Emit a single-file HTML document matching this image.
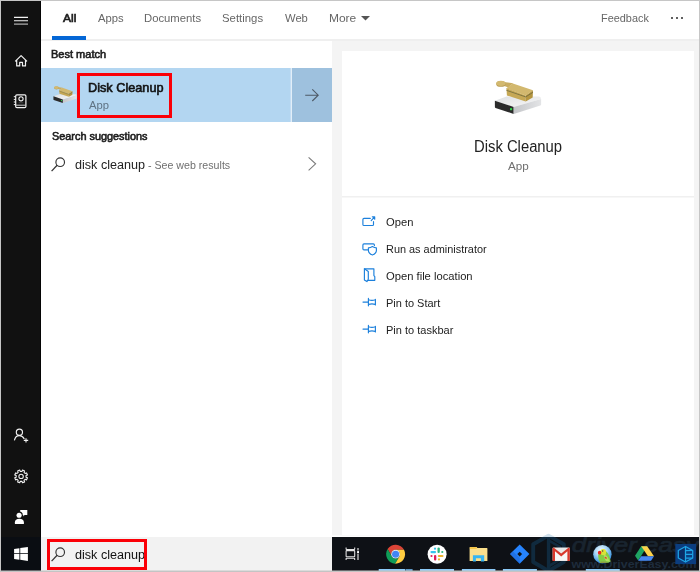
<!DOCTYPE html>
<html>
<head>
<meta charset="utf-8">
<style>
html,body{margin:0;padding:0;}
body{width:700px;height:572px;overflow:hidden;background:#f4f4f4;font-family:"Liberation Sans",sans-serif;position:relative;}
.abs{position:absolute;}
#root{left:0;top:0;width:700px;height:572px;background:#f4f4f4;overflow:hidden;}
.t{position:absolute;white-space:nowrap;line-height:1;transform-origin:0 0;}
.red{border:3px solid #fb0007;box-sizing:border-box;}
svg{position:absolute;overflow:visible;}
</style>
</head>
<body>
<div id="root" class="abs">
  <!-- header -->
  <div class="abs" style="left:41px;top:1px;width:658px;height:39px;background:#fff;"></div>
  <div class="abs" style="left:41px;top:39px;width:658px;height:2px;background:#efefef;"></div>
  <!-- left panel -->
  <div class="abs" style="left:41px;top:41px;width:291px;height:496px;background:#fff;"></div>
  <!-- sidebar -->
  <div class="abs" style="left:1px;top:1px;width:40px;height:536px;background:#111;"></div>
  <div class="abs" style="left:40px;top:1px;width:1px;height:536px;background:#050505;"></div>
  <div class="abs" style="left:1px;top:537px;width:40px;height:34px;background:#0a0d12;"></div>

  <!-- tab underline -->
  <div class="abs" style="left:52px;top:36px;width:34px;height:4px;background:#0467d6;"></div>
  <svg style="left:361px;top:16px" width="9" height="5" viewBox="0 0 9 5"><path d="M0 0 L9 0 L4.5 4.6 Z" fill="#555"/></svg>
  <!-- dots -->
  <div class="abs" style="left:671px;top:17px;width:2px;height:2px;background:#606060;"></div>
  <div class="abs" style="left:676px;top:17px;width:2px;height:2px;background:#606060;"></div>
  <div class="abs" style="left:681px;top:17px;width:2px;height:2px;background:#606060;"></div>

  <!-- selected row -->
  <div class="abs" style="left:41px;top:68px;width:250px;height:53.5px;background:#b3d6f1;"></div>
  <div class="abs" style="left:290px;top:68px;width:1px;height:53.5px;background:#c4def4;"></div><div class="abs" style="left:291px;top:68px;width:1px;height:53.5px;background:#e2eef8;"></div>
  <div class="abs" style="left:292px;top:68px;width:40px;height:53.5px;background:#9ec1de;"></div>
  <div class="abs red" style="left:77px;top:73px;width:95px;height:44.6px;"></div>
  <!-- arrow -->
  <svg style="left:305px;top:88.5px" width="14" height="13" viewBox="0 0 14 13"><path d="M0.2 6.2 H13 M7.3 0.4 L13.2 6.2 L7.3 12" fill="none" stroke="#4e5a66" stroke-width="1.1"/></svg>
  <!-- chevron -->
  <svg style="left:308px;top:157px" width="9" height="14" viewBox="0 0 9 14"><path d="M0.6 0.4 L7.6 6.8 L0.6 13.4" fill="none" stroke="#7a7a7a" stroke-width="1.1"/></svg>

  <!-- magnifier (suggestion) -->
  <svg style="left:51.1px;top:156.5px" width="15" height="15" viewBox="0 0 15 15"><circle cx="9.2" cy="5.2" r="4.3" fill="none" stroke="#333" stroke-width="1.15"/><path d="M6.1 8.3 L0.6 14.1" stroke="#333" stroke-width="1.25" fill="none"/></svg>

  <!-- right cards -->
  <div class="abs" style="left:342px;top:50.5px;width:352px;height:487px;background:#fff;"></div>
  <div class="abs" style="left:342px;top:196px;width:352px;height:1px;background:#f0f0f0;"></div><div class="abs" style="left:342px;top:197px;width:352px;height:1px;background:#f7f7f7;"></div>

<div class="abs" style="left:332px;top:536px;width:367px;height:1px;background:#fff;"></div>
  <div class="abs" style="left:332px;top:535px;width:367px;height:1px;background:#fafafa;"></div>

  <!-- sidebar icons (page coords) -->
  <svg style="left:0;top:0" width="42" height="572" viewBox="0 0 42 572">
    <g stroke="#f2f2f2" fill="none" stroke-width="1.15">
      <path d="M14 17.3 H28 M14 20.7 H28" />
      <path d="M14 24.1 H28" stroke="#bdbdbd"/>
      <!-- home -->
      <path d="M15.2 61.4 L21.1 55.6 L27 61.4 M16.7 60.3 V65.9 H19.7 V62.3 H22.5 V65.9 H25.5 V60.3" stroke-width="1.2" stroke-linejoin="round"/>
      <!-- notebook -->
      <rect x="15.7" y="94.9" width="10.2" height="12.8" rx="1.2" stroke-width="1.2"/>
      <path d="M15.9 105.2 H25.8" stroke="#cfcfcf" stroke-width="1"/>
      <circle cx="21" cy="98.8" r="2.1" stroke-width="1.1"/>
      <path d="M18.6 102.8 H23.4" stroke="#555" stroke-width="0.8"/>
      <path d="M13.8 96.7 H15.8 M13.8 99.4 H15.8 M13.8 102 H15.8 M13.8 104.6 H15.8" stroke-width="1"/>
      <!-- person add -->
      <circle cx="19.4" cy="432.3" r="3.1" stroke-width="1.15"/>
      <path d="M14.4 440.3 C15 437.3 17 435.6 19.4 435.6 C21.6 435.6 23.2 436.9 24.3 439" stroke-width="1.15"/>
      <path d="M26 438.2 V442.6 M23.8 440.4 H28.2" stroke-width="1.1"/>
      <!-- gear -->
      <path d="M27.50 475.28 L27.50 477.52 L25.96 477.57 L25.36 479.01 L26.42 480.14 L24.84 481.72 L23.71 480.66 L22.27 481.26 L22.22 482.80 L19.98 482.80 L19.93 481.26 L18.49 480.66 L17.36 481.72 L15.78 480.14 L16.84 479.01 L16.24 477.57 L14.70 477.52 L14.70 475.28 L16.24 475.23 L16.84 473.79 L15.78 472.66 L17.36 471.08 L18.49 472.14 L19.93 471.54 L19.98 470.00 L22.22 470.00 L22.27 471.54 L23.71 472.14 L24.84 471.08 L26.42 472.66 L25.36 473.79 L25.96 475.23 Z" stroke-width="1.1" stroke-linejoin="round" transform="rotate(22.5 21.1 476.4)"/>
      <circle cx="21.1" cy="476.4" r="2.2" stroke-width="1.05"/>
    </g>
    <!-- feedback person -->
    <g fill="#fff">
      <path d="M20.2 509.9 H27.3 V515.1 H24.6 L23.3 516.4 V515.1 H20.2 Z"/>
      <circle cx="19.1" cy="515.3" r="3.7" fill="#111"/>
      <circle cx="19.1" cy="515.3" r="2.55"/>
      <path d="M14.9 523.9 V522.2 C14.9 520 16.6 518.7 19.4 518.7 C22.2 518.7 23.9 520 23.9 522.2 V523.9 Z"/>
    </g>
    <!-- windows logo -->
    <g fill="#fff">
      <path d="M14.1 548.9 L19.4 548.15 V553.3 H14.1 Z"/>
      <path d="M20.25 548.05 L27.9 546.9 V553.3 H20.25 Z"/>
      <path d="M14.1 554.1 H19.4 V559.75 L14.1 559 Z"/>
      <path d="M20.25 554.1 H27.9 V560.9 L20.25 559.85 Z"/>
    </g>
  </svg>
<svg style="left:488px;top:74px" width="60" height="46" viewBox="488 74 60 46">
    <defs>
      <linearGradient id="gTop" x1="0" y1="0" x2="1" y2="1"><stop offset="0" stop-color="#dfe1e3"/><stop offset="1" stop-color="#f7f7f7"/></linearGradient>
      <linearGradient id="gSide" x1="0" y1="0" x2="1" y2="0"><stop offset="0" stop-color="#c4c6c9"/><stop offset="1" stop-color="#e3e4e6"/></linearGradient>
    </defs>
    <path d="M494.9 100.7 L506.6 96.4 H539 Q541.2 96.6 541.1 99 L513.7 107 Z" fill="url(#gTop)"/>
    <path d="M494.9 100.7 L513.7 107 V113.9 L495.5 108 Q494.9 107.7 494.9 107 Z" fill="#2b2b2b"/>
    <path d="M513.7 107 L541.1 99 V104.6 Q541.1 105.3 540.4 105.6 L513.7 113.9 Z" fill="url(#gSide)"/>
    <rect x="510" y="108.1" width="2.1" height="2.1" fill="#2fd046"/>
    <!-- brush -->
    <path d="M503.6 82.0 L513.2 83.3 L508.2 87.6 L503.8 85.7 Z" fill="#c9ad62"/>
    <ellipse cx="500.9" cy="83.9" rx="4.7" ry="2.9" fill="#b99c50"/>
    <ellipse cx="500.9" cy="83.3" rx="4.6" ry="2.6" fill="#d3b970"/>
    <path d="M512.9 83.4 L533 90.3 L525.7 95.6 L506.4 88.3 Z" fill="#d2b86e"/>
    <path d="M506.4 88.1 L525.7 95.4 V101.5 L506.9 95.4 Z" fill="#c6a855"/>
    <path d="M525.7 95.4 L533 90.3 L532.7 97.5 L525.7 101.5 Z" fill="#b59641"/>
    <path d="M506.4 90.3 L525.7 96.9 L533 92.3" fill="none" stroke="#6f6a3e" stroke-width="0.8"/>
    </svg><svg style="left:49.55px;top:82.5px" width="30" height="23" viewBox="488 74 60 46">
    <defs>
      <linearGradient id="gTop2" x1="0" y1="0" x2="1" y2="1"><stop offset="0" stop-color="#dfe1e3"/><stop offset="1" stop-color="#f7f7f7"/></linearGradient>
      <linearGradient id="gSide2" x1="0" y1="0" x2="1" y2="0"><stop offset="0" stop-color="#c4c6c9"/><stop offset="1" stop-color="#e3e4e6"/></linearGradient>
    </defs>
    <path d="M494.9 100.7 L506.6 96.4 H539 Q541.2 96.6 541.1 99 L513.7 107 Z" fill="url(#gTop2)"/>
    <path d="M494.9 100.7 L513.7 107 V113.9 L495.5 108 Q494.9 107.7 494.9 107 Z" fill="#2b2b2b"/>
    <path d="M513.7 107 L541.1 99 V104.6 Q541.1 105.3 540.4 105.6 L513.7 113.9 Z" fill="url(#gSide2)"/>
    <rect x="510" y="108.1" width="2.1" height="2.1" fill="#2fd046"/>
    <!-- brush -->
    <path d="M503.6 82.0 L513.2 83.3 L508.2 87.6 L503.8 85.7 Z" fill="#c9ad62"/>
    <ellipse cx="500.9" cy="83.9" rx="4.7" ry="2.9" fill="#b99c50"/>
    <ellipse cx="500.9" cy="83.3" rx="4.6" ry="2.6" fill="#d3b970"/>
    <path d="M512.9 83.4 L533 90.3 L525.7 95.6 L506.4 88.3 Z" fill="#d2b86e"/>
    <path d="M506.4 88.1 L525.7 95.4 V101.5 L506.9 95.4 Z" fill="#c6a855"/>
    <path d="M525.7 95.4 L533 90.3 L532.7 97.5 L525.7 101.5 Z" fill="#b59641"/>
    <path d="M506.4 90.3 L525.7 96.9 L533 92.3" fill="none" stroke="#6f6a3e" stroke-width="0.8"/>
    </svg>
  <svg style="left:356px;top:210px" width="30" height="110" viewBox="356 210 30 110">
   <g fill="none" stroke="#1c80dc" stroke-width="1.15" stroke-linejoin="round" stroke-linecap="round">
    <!-- open -->
    <path d="M370.3 218.4 H364 Q362.9 218.4 362.9 219.5 V224.4 Q362.9 225.5 364 225.5 H372.4 Q373.5 225.5 373.5 224.4 V221.6"/>
    <path d="M371.2 220.6 L374.6 216.9 M372.3 216.8 H374.7 V219.2"/>
    <!-- run as admin -->
    <path d="M367.6 249.8 H364 Q362.9 249.8 362.9 248.7 V244.9 Q362.9 243.8 364 243.8 H373.3 Q374.4 243.8 374.4 244.9 V245.6"/>
    <path d="M372.4 246.6 Q374.4 247.9 376.4 247.9 V250.6 Q376.2 253.5 372.4 255 Q368.6 253.5 368.4 250.6 V247.9 Q370.4 247.9 372.4 246.6 Z"/>
    <!-- open file location -->
    <path d="M364.4 268.8 H373.9 V275.6 L374.8 276.6 V280.3 H368.3"/>
    <path d="M364.4 268.8 L368.3 271.4 V279.2 L366.9 281.6 L364.4 279.9 Z"/>
    <!-- pin 1 -->
    <path d="M363 302.1 H367.8 M368.4 298.4 V305.8 M375.4 299.2 V305 M368.6 299.8 Q372 301 375.2 299.8 M368.6 304.4 Q372 303.2 375.2 304.4"/>
    <!-- pin 2 -->
    <path transform="translate(0,27)" d="M363 302.1 H367.8 M368.4 298.4 V305.8 M375.4 299.2 V305 M368.6 299.8 Q372 301 375.2 299.8 M368.6 304.4 Q372 303.2 375.2 304.4"/>
   </g>
  </svg>



  <!-- bottom search box -->
  <div class="abs" style="left:41px;top:537px;width:291px;height:34px;background:#f2f2f2;"></div>
  <div class="abs red" style="left:47px;top:539px;width:100px;height:31px;z-index:5;"></div>
  <svg style="left:51.1px;top:547px" width="15" height="15" viewBox="0 0 15 15"><circle cx="9.2" cy="5.2" r="4.3" fill="none" stroke="#333" stroke-width="1.15"/><path d="M6.1 8.3 L0.6 14.1" stroke="#333" stroke-width="1.25" fill="none"/></svg>
  <!-- taskbar -->
  <div class="abs" style="left:332px;top:537px;width:367px;height:34px;background:#0e1116;"></div>


  <!-- watermark on white above taskbar -->
  <svg style="left:520px;top:525px" width="180" height="47" viewBox="520 525 180 47">
    <clipPath id="cw"><rect x="520" y="525" width="180" height="12"/></clipPath>
    <clipPath id="cd"><rect x="520" y="537" width="180" height="34"/></clipPath>
    <g clip-path="url(#cw)" fill="none" stroke="#cfe0ec" stroke-width="3.8" stroke-linejoin="round">
      <path d="M548.5 535.6 L563.8 544.3 V562 L548.5 570.9 L533.2 562 V544.3 Z"/>
    </g>
    <g clip-path="url(#cd)">
      <g fill="none" stroke="#102a3e" stroke-width="3.9" stroke-linejoin="round">
        <path d="M548.5 535.6 L563.8 544.3 V562 L548.5 570.9 L533.2 562 V544.3 Z"/>
        <path d="M548.6 536 V572" stroke-width="3.5"/>
        <path d="M549 540.6 L559.8 546.9 V559.6 L549 566" stroke-width="2.8"/>
      </g>
      <text x="571.8" y="551.8" font-family="Liberation Sans, sans-serif" font-style="italic" font-weight="normal" stroke="#19242f" stroke-width="0.7" font-size="21" fill="#19242f" textLength="127" lengthAdjust="spacingAndGlyphs">driver easy</text>
      <text x="571.5" y="568.3" font-family="Liberation Sans, sans-serif" font-weight="bold" font-size="10.5" fill="#1e2c3c" textLength="125" lengthAdjust="spacingAndGlyphs">www.DriverEasy.com</text>
    </g>
  </svg>
  <svg style="left:332px;top:537px" width="368" height="35" viewBox="332 537 368 35">
    <!-- task view -->
    <g fill="none" stroke="#e6e6e6" stroke-width="1.05">
      <rect x="346.1" y="550.6" width="8.6" height="6.2" rx="0.6"/>
      <path d="M346.1 547.6 V549 Q346.1 549.4 346.6 549.4 H354.2 Q354.7 549.4 354.7 549 V547.6"/>
      <path d="M346.1 560 V558.6 Q346.1 558.2 346.6 558.2 H354.2 Q354.7 558.2 354.7 558.6 V560"/>
      <path d="M358 547.9 V550.4 M358 553.6 V560" stroke="#cfcfcf" stroke-width="1.3"/>
    </g>
    <rect x="357.1" y="551.1" width="1.9" height="1.9" fill="#fff"/>
    <!-- chrome -->
    <path d="M395.60 549.80 L404.02 549.80 A9.5 9.5 0 0 0 387.58 549.11 L391.79 556.40 A4.4 4.4 0 0 1 395.60 549.80 Z" fill="#db4437"/><path d="M391.79 556.40 L387.58 549.11 A9.5 9.5 0 0 0 395.20 563.69 L399.41 556.40 A4.4 4.4 0 0 1 391.79 556.40 Z" fill="#0f9d58"/><path d="M399.41 556.40 L395.20 563.69 A9.5 9.5 0 0 0 404.02 549.80 L395.60 549.80 A4.4 4.4 0 0 1 399.41 556.40 Z" fill="#ffcd40"/><circle cx="395.6" cy="554.2" r="4.4" fill="#f1f1f1"/><circle cx="395.6" cy="554.2" r="3.55" fill="#4285f4"/>
    <rect x="378.7" y="569" width="26.5" height="2" fill="#8ccbf9"/>
    <rect x="405.6" y="569" width="7" height="2" fill="#5e98c6"/>
    <!-- slack -->
    <circle cx="437.1" cy="554.2" r="9.5" fill="#fff"/>
    <g>
      <rect x="430.4" y="551" width="5.7" height="2.2" rx="1.1" fill="#36c5f0"/><circle cx="435" cy="548.7" r="1.1" fill="#36c5f0"/>
      <rect x="437.5" y="547.4" width="2.3" height="5.6" rx="1.1" fill="#2eb67d"/><circle cx="442.3" cy="552" r="1.1" fill="#2eb67d"/>
      <rect x="437.8" y="554.9" width="5.7" height="2.2" rx="1.1" fill="#ecb22e"/><circle cx="439" cy="559.4" r="1.1" fill="#ecb22e"/>
      <rect x="434" y="554.9" width="2.3" height="5.7" rx="1.1" fill="#e01e5a"/><circle cx="431.5" cy="556" r="1.1" fill="#e01e5a"/>
    </g>
    <rect x="420" y="569" width="34" height="2" fill="#8ccbf9"/>
    <!-- explorer -->
    <path d="M469.6 547.4 Q469.6 546.9 470.1 546.9 H476.4 L477.4 547.9 H486.9 Q487.4 547.9 487.4 548.4 V560.9 H469.6 Z" fill="#fbdf8c"/>
    <path d="M469.9 547.1 H476.4 L477.2 548 L476.2 548.9 H469.9 Z" fill="#f5c64a"/>
    <path d="M472.9 555.2 H484.2 V561.5 H480.9 V558.2 H475.9 V561.5 H472.9 Z" fill="#38b5f1"/>
    <rect x="461.9" y="569" width="33.5" height="2" fill="#8ccbf9"/>
    <!-- jira -->
    <path d="M519.7 544.4 L529.4 554.1 L519.7 563.8 L510 554.1 Z" fill="#2684ff"/>
    <path d="M519.7 544.4 L514.8 549.3 L519.7 554.1 L524.6 549.3 Z" fill="#2a78ee" opacity="0.0"/>
    <path d="M516.2 547.9 L512.9 551.2 L519.7 558 L519.7 563.8 L510 554.1 Z" fill="#1c63d0" opacity="0.55"/>
    <path d="M519.7 551.7 L522.1 554.1 L519.7 556.5 L517.3 554.1 Z" fill="#0e1116"/>
    <rect x="502.9" y="569" width="34" height="2" fill="#8ccbf9"/>
    <!-- gmail -->
    <rect x="552.6" y="547.4" width="17.2" height="13.6" rx="1" fill="#e9e9e9"/>
    <path d="M554 548.5 L561.2 554.6 L568.4 548.5 V560 H554 Z" fill="#f7f7f7"/>
    <path d="M552.6 561 V548.4 Q552.6 547.4 553.6 547.4 L561.2 553.6 L568.8 547.4 Q569.8 547.4 569.8 548.4 V561 H567.4 V551.3 L561.2 556.5 L555 551.3 V561 Z" fill="#d8392d"/>
    <!-- parrot -->
    <defs><radialGradient id="gGlobe" cx="0.42" cy="0.3" r="0.75"><stop offset="0" stop-color="#f4fbff"/><stop offset="0.45" stop-color="#a6d5f6"/><stop offset="0.8" stop-color="#4d9fe3"/><stop offset="1" stop-color="#1f6fc4"/></radialGradient></defs>
    <circle cx="602.4" cy="554.2" r="9.2" fill="url(#gGlobe)"/>
    <path d="M598.2 556.5 Q597.8 553.6 600.5 553.2 L606 551.3 Q609.8 554.5 610.6 561.2 L608.5 562.8 L600.4 563 Q598.2 560.5 598.2 556.5 Z" fill="#84cc44"/>
    <path d="M604 555 Q607 554.6 608.3 558.5 Q609.2 561 610.8 561.8 L606 561 Q603.6 558.5 604 555 Z" fill="#b5dc62"/>
    <circle cx="603.2" cy="552" r="2.9" fill="#e6e432"/>
    <path d="M601 554 Q603.5 556.5 606 554.2 L605.5 552 L601 552.5 Z" fill="#d6e23a"/>
    <ellipse cx="599.6" cy="552.7" rx="1.75" ry="1.9" fill="#e8261d"/>
    <circle cx="602.7" cy="551" r="0.65" fill="#2a3a55"/>
    <ellipse cx="605.8" cy="557.8" rx="1.3" ry="0.8" transform="rotate(35 605.8 557.8)" fill="#e0452b"/>
    <path d="M600.5 562.2 H606.5" stroke="#9c7a3c" stroke-width="0.8"/>
    <rect x="585.8" y="569" width="34" height="2" fill="#8ccbf9"/>
    <!-- drive -->
    <path d="M641.2 546.3 H647.2 L638.2 560.6 L635 555.8 Z" fill="#1fa463"/>
    <path d="M641.2 546.3 H647.2 L654 556.2 H648 Z" fill="#fdd24c"/>
    <path d="M641.1 556.2 H654 L651 560.8 H638.1 Z" fill="#4688f4"/>
    <!-- last -->
    <rect x="675.3" y="543.9" width="20.8" height="20.2" fill="#0b3d7f"/>
    <path d="M685.5 546.6 L678.3 550.5 V558 L685.5 561.9 Z" fill="#0a2d66"/>
    <g fill="none" stroke="#1ea4e6" stroke-width="1.25" stroke-linejoin="round">
      <path d="M685.5 546.5 L692.7 550.5 V558 L685.5 562 L678.3 558 V550.5 Z"/>
      <path d="M685.5 546.8 V561.8 M685.7 550.6 L692.2 550.4 M685.7 554.3 H692.4 M685.7 558 L692.2 558.1"/>
    </g>
  </svg>


<div id="txt" class="abs" style="left:0;top:0;width:700px;height:572px;will-change:transform;">
<div class="t" id="tAll" style="left:63.02px;top:13px;font-size:10.5px;font-weight:normal;-webkit-text-stroke:0.58px #1a1a1a;color:#1a1a1a;transform:scaleX(1.1496);">All</div>
<div class="t" id="tApps" style="left:98.00px;top:13px;font-size:10.5px;font-weight:normal;color:#666;transform:scaleX(1.0705);">Apps</div>
<div class="t" id="tDocs" style="left:144.08px;top:13px;font-size:10.5px;font-weight:normal;color:#666;transform:scaleX(1.0759);">Documents</div>
<div class="t" id="tSet" style="left:222.39px;top:13px;font-size:10.5px;font-weight:normal;color:#666;transform:scaleX(1.0823);">Settings</div>
<div class="t" id="tWeb" style="left:285.03px;top:13px;font-size:10.5px;font-weight:normal;color:#666;transform:scaleX(1.0682);">Web</div>
<div class="t" id="tMore" style="left:329.10px;top:13px;font-size:10.5px;font-weight:normal;color:#666;transform:scaleX(1.1395);">More</div>
<div class="t" id="tFb" style="left:600.85px;top:13px;font-size:10.5px;font-weight:normal;color:#666;transform:scaleX(1.0372);">Feedback</div>
<div class="t" id="tBest" style="left:51.43px;top:49px;font-size:10.5px;font-weight:normal;-webkit-text-stroke:0.58px #1c1c1c;color:#1c1c1c;transform:scaleX(1.0485);">Best match</div>
<div class="t" id="tDisk" style="left:88.23px;top:82px;font-size:12.5px;font-weight:normal;-webkit-text-stroke:0.58px #111;color:#111;transform:scaleX(1.0165);">Disk Cleanup</div>
<div class="t" id="tApp1" style="left:89.22px;top:101px;font-size:10px;font-weight:normal;color:#5f7384;transform:scaleX(1.1255);">App</div>
<div class="t" id="tSug" style="left:51.64px;top:131px;font-size:10.5px;font-weight:normal;-webkit-text-stroke:0.58px #1c1c1c;color:#1c1c1c;transform:scaleX(1.0355);">Search suggestions</div>
<div class="t" id="tDc" style="left:75.48px;top:159px;font-size:12px;font-weight:normal;color:#222;transform:scaleX(1.0504);">disk cleanup</div>
<div class="t" id="tSee" style="left:148.01px;top:161px;font-size:10px;font-weight:normal;color:#707070;transform:scaleX(1.0634);">- See web results</div>
<div class="t" id="tTitle" style="left:474.04px;top:139px;font-size:16px;font-weight:normal;color:#222;transform:scaleX(0.9257);">Disk Cleanup</div>
<div class="t" id="tApp2" style="left:507.90px;top:161px;font-size:10.5px;font-weight:normal;color:#707070;transform:scaleX(1.1111);">App</div>
<div class="t" id="a1" style="left:385.89px;top:217px;font-size:10.5px;font-weight:normal;color:#222;transform:scaleX(1.0655);">Open</div>
<div class="t" id="a2" style="left:386.13px;top:244px;font-size:10.5px;font-weight:normal;color:#222;transform:scaleX(1.0390);">Run as administrator</div>
<div class="t" id="a3" style="left:385.88px;top:271px;font-size:10.5px;font-weight:normal;color:#222;transform:scaleX(1.0673);">Open file location</div>
<div class="t" id="a4" style="left:385.77px;top:298px;font-size:10.5px;font-weight:normal;color:#222;transform:scaleX(1.0454);">Pin to Start</div>
<div class="t" id="a5" style="left:385.77px;top:325px;font-size:10.5px;font-weight:normal;color:#222;transform:scaleX(1.0498);">Pin to taskbar</div>
<div class="t" id="tInput" style="left:75.18px;top:549px;font-size:12px;font-weight:normal;color:#111;transform:scaleX(1.0504);">disk cleanup</div>
</div>

  <!-- outer border -->
  <div class="abs" style="left:0;top:0;width:700px;height:1px;background:#c6c6c6;z-index:9;"></div>
  <div class="abs" style="left:0;top:0;width:1px;height:572px;background:#c6c6c6;z-index:9;"></div>
  <div class="abs" style="left:699px;top:0;width:1px;height:572px;background:#c6c6c6;z-index:9;"></div>
  <div class="abs" style="left:0;top:571px;width:700px;height:1px;background:#c4c4c4;z-index:9;"></div>
  <div class="abs" style="left:0;top:570px;width:700px;height:1px;background:rgba(196,196,196,0.5);z-index:9;"></div>
</div>
</body>
</html>
